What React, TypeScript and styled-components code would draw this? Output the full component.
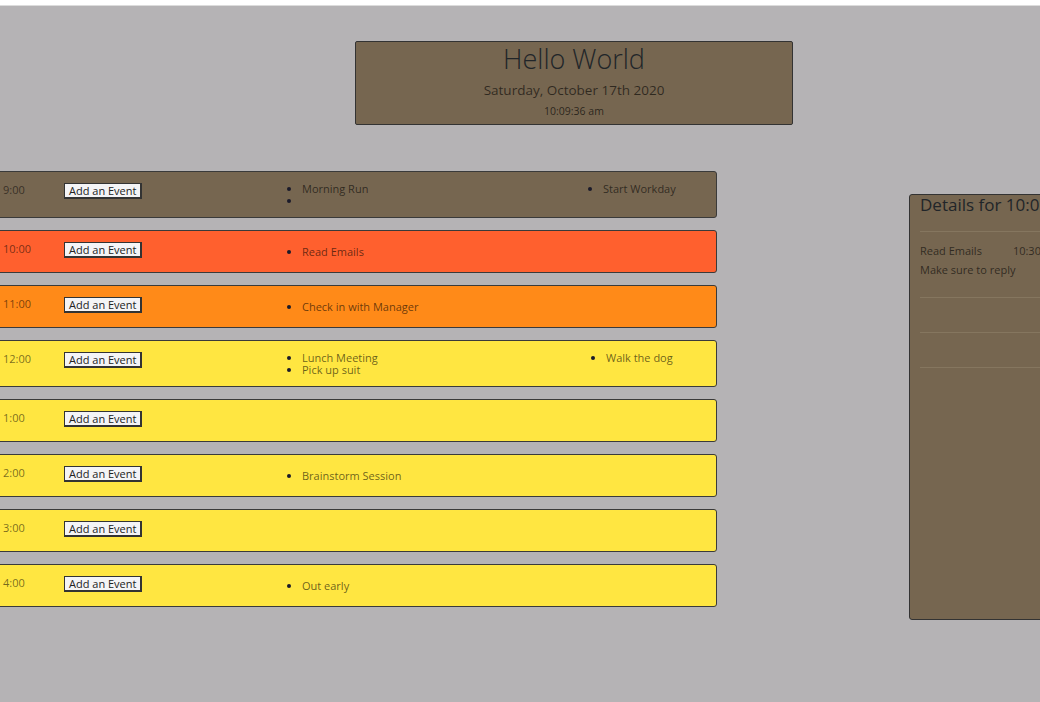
import React from "react";
import styled, { createGlobalStyle } from "styled-components";

const Global = createGlobalStyle`
  html, body { margin: 0; padding: 0; }
  body {
    background: #b5b3b5;
    font-family: "Open Sans", "Noto Sans", sans-serif;
    color: #212529;
    overflow: hidden;
  }
  * { box-sizing: border-box; }
`;

const TopStrip = styled.div`
  height: 6px;
  background: #ffffff;
  border-bottom: 1px solid #dcdcdc;
`;

const Header = styled.header`
  width: 438px;
  height: 84px;
  margin: 35px 0 0 355px;
  background: #766650;
  border: 1px solid #333;
  border-radius: 2px;
  display: flex;
  flex-direction: column;
  align-items: center;
`;

const Title = styled.h1`
  margin: 0;
  font-size: 27px;
  font-weight: 300;
  line-height: 34px;
  color: #212529;
`;

const DateLine = styled.div`
  font-size: 13.5px;
  line-height: 20px;
  margin-top: 4px;
  color: rgba(0, 0, 0, 0.6);
`;

const Clock = styled.div`
  font-size: 10.5px;
  line-height: 16px;
  margin-top: 3px;
  color: rgba(0, 0, 0, 0.65);
`;

const Main = styled.main`
  display: flex;
  align-items: flex-start;
  margin-top: 46px;
`;

const Schedule = styled.section`
  width: 737px;
  flex-shrink: 0;
  margin-left: -20px;
  display: flex;
  flex-direction: column;
  gap: 12px;
`;

const Row = styled.div<{ $bg: string }>`
  display: grid;
  grid-template-columns: 83px 216px 301px 1fr;
  align-items: center;
  min-height: 43px;
  background: ${(p) => p.$bg};
  border: 1px solid #3a3a3a;
  border-radius: 3px;
`;

const Time = styled.div`
  align-self: start;
  padding: 10px 0 0 22px;
  font-size: 11px;
  line-height: 16px;
  color: rgba(0, 0, 0, 0.55);
`;

const AddButton = styled.button`
  align-self: start;
  justify-self: start;
  margin-top: 11px;
  height: 16px;
  padding: 0 4px;
  font-family: "Open Sans", "Noto Sans", sans-serif;
  font-size: 11px;
  line-height: 13px;
  color: #222;
  background: #f4f4f6;
  border: 1px solid #333;
  border-right-width: 2px;
  border-bottom-width: 2px;
  border-radius: 0;
`;

const Col = styled.div<{ $top?: boolean }>`
  align-self: ${(p) => (p.$top ? "start" : "center")};
`;

const List = styled.ul<{ $shift?: number }>`
  margin: 11px 0 10px;
  padding-left: ${(p) => 22 + (p.$shift ?? 0)}px;
  font-size: 11px;
  line-height: 12px;
  color: #1a1a2a;
`;

const Item = styled.li`
  & > span {
    color: rgba(0, 0, 0, 0.6);
  }
`;

const Details = styled.aside`
  margin: 23px 0 0 192px;
  width: 200px;
  height: 426px;
  flex-shrink: 0;
  background: #766650;
  border: 1px solid #333;
  border-radius: 3px;
  padding-left: 10px;
`;

const DetailsTitle = styled.h2`
  margin: 0;
  height: 37px;
  font-size: 17px;
  font-weight: 400;
  line-height: 20px;
  color: #212529;
  border-bottom: 1px solid #85765f;
`;

const Slot = styled.div<{ $h: number }>`
  height: ${(p) => p.$h}px;
  border-bottom: 1px solid #85765f;
  font-size: 11px;
  color: rgba(0, 0, 0, 0.6);
  padding-top: 10px;
`;

const SlotHead = styled.div`
  display: flex;
  gap: 31px;
  line-height: 17px;
`;

const SlotNote = styled.div`
  line-height: 17px;
  margin-top: 2px;
`;

type Hour = {
  time: string;
  bg: string;
  a: string[];
  b: string[];
  bShift?: number;
};

const hours: Hour[] = [
  { time: "9:00", bg: "#766650", a: ["Morning Run", "\u00a0"], b: ["Start Workday"] },
  { time: "10:00", bg: "#ff602e", a: ["Read Emails"], b: [] },
  { time: "11:00", bg: "#ff8a18", a: ["Check in with Manager"], b: [] },
  { time: "12:00", bg: "#ffe641", a: ["Lunch Meeting", "Pick up suit"], b: ["Walk the dog"], bShift: 3 },
  { time: "1:00", bg: "#ffe641", a: [], b: [] },
  { time: "2:00", bg: "#ffe641", a: ["Brainstorm Session"], b: [] },
  { time: "3:00", bg: "#ffe641", a: [], b: [] },
  { time: "4:00", bg: "#ffe641", a: ["Out early"], b: [] },
];

export default function App() {
  return (
    <>
      <Global />
      <TopStrip />
      <Header>
        <Title>Hello World</Title>
        <DateLine>Saturday, October 17th 2020</DateLine>
        <Clock>10:09:36 am</Clock>
      </Header>
      <Main>
        <Schedule>
          {hours.map((h) => (
            <Row key={h.time} $bg={h.bg}>
              <Time>{h.time}</Time>
              <AddButton>Add an Event</AddButton>
              <Col>
                {h.a.length > 0 && (
                  <List>
                    {h.a.map((t, i) => (
                      <Item key={i}>
                        <span>{t}</span>
                      </Item>
                    ))}
                  </List>
                )}
              </Col>
              <Col $top>
                {h.b.length > 0 && (
                  <List $shift={h.bShift}>
                    {h.b.map((t, i) => (
                      <Item key={i}>
                        <span>{t}</span>
                      </Item>
                    ))}
                  </List>
                )}
              </Col>
            </Row>
          ))}
        </Schedule>
        <Details>
          <DetailsTitle>Details for 10:00</DetailsTitle>
          <Slot $h={66}>
            <SlotHead>
              <span>Read Emails</span>
              <span>10:30</span>
            </SlotHead>
            <SlotNote>Make sure to reply</SlotNote>
          </Slot>
          <Slot $h={35} />
          <Slot $h={35} />
        </Details>
      </Main>
    </>
  );
}
